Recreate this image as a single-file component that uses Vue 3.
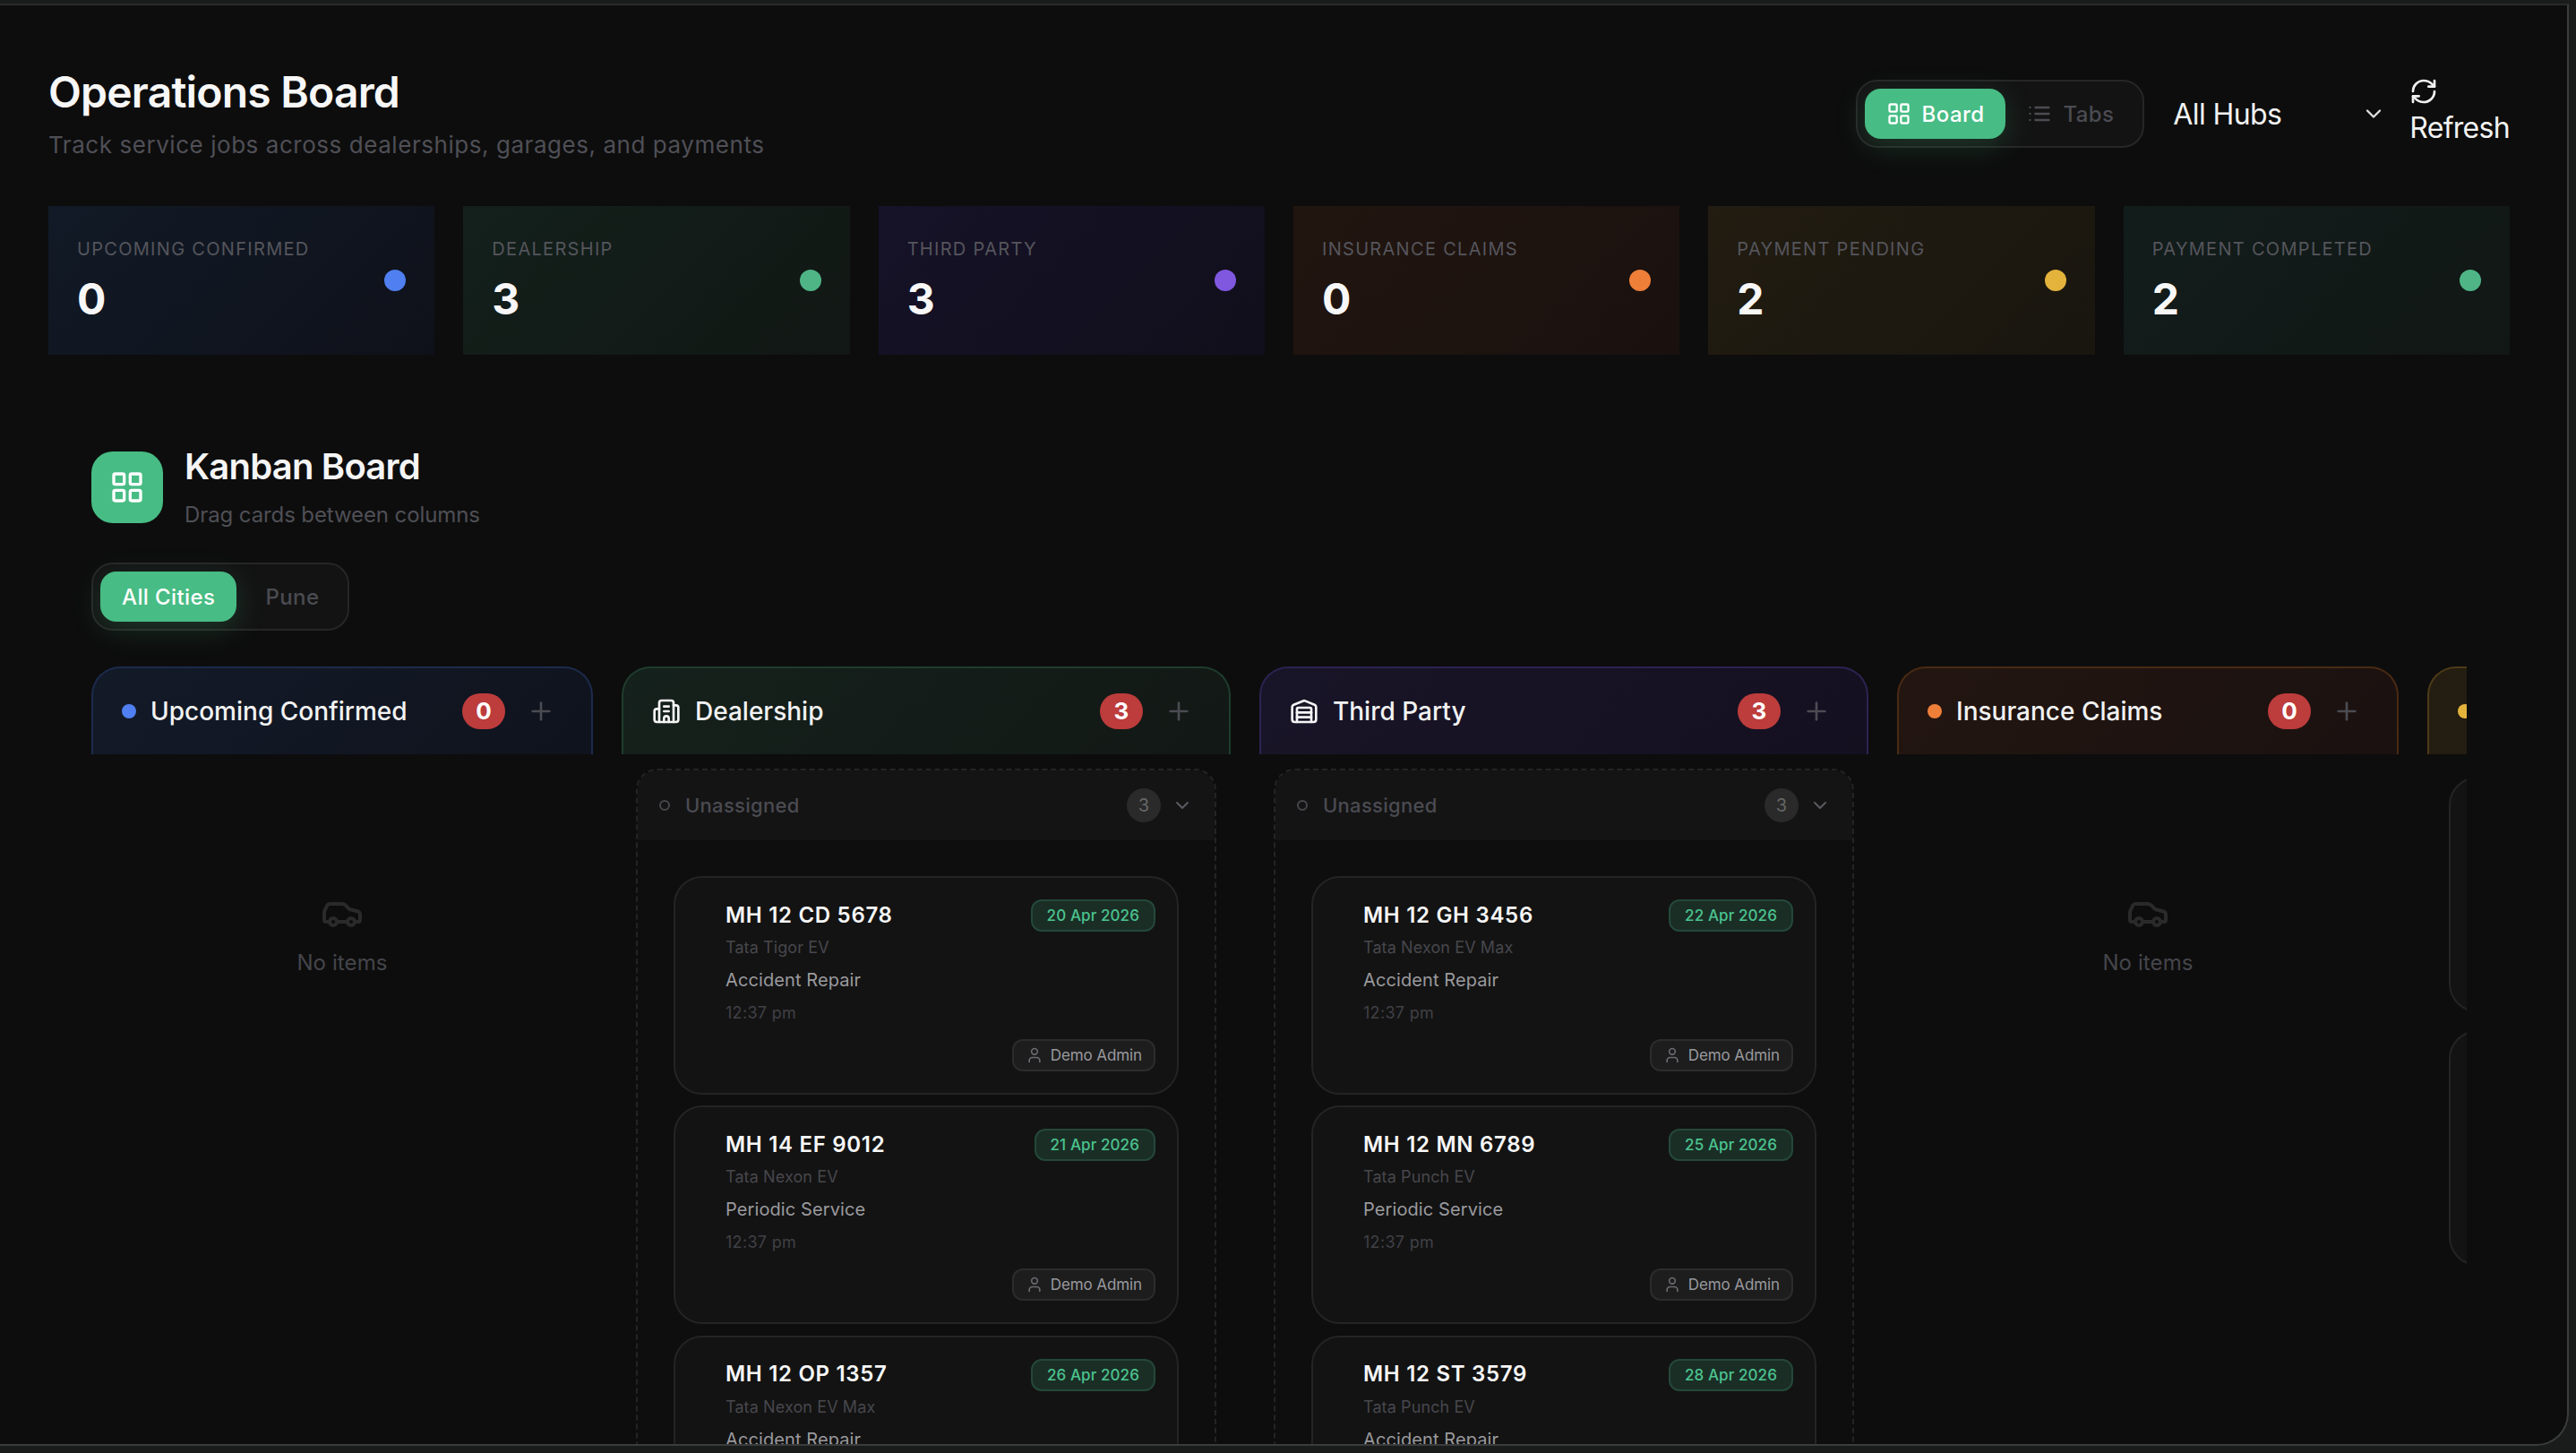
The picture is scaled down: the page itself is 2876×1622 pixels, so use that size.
<script setup>
import { h } from 'vue'

const icons = {
  grid: [
    'M4 3h5a1 1 0 0 1 1 1v5a1 1 0 0 1-1 1H4a1 1 0 0 1-1-1V4a1 1 0 0 1 1-1z',
    'M15 3h5a1 1 0 0 1 1 1v5a1 1 0 0 1-1 1h-5a1 1 0 0 1-1-1V4a1 1 0 0 1 1-1z',
    'M15 14h5a1 1 0 0 1 1 1v5a1 1 0 0 1-1 1h-5a1 1 0 0 1-1-1v-5a1 1 0 0 1 1-1z',
    'M4 14h5a1 1 0 0 1 1 1v5a1 1 0 0 1-1 1H4a1 1 0 0 1-1-1v-5a1 1 0 0 1 1-1z'
  ],
  list: ['M3 12h.01', 'M3 18h.01', 'M3 6h.01', 'M8 12h13', 'M8 18h13', 'M8 6h13'],
  refresh: [
    'M3 12a9 9 0 0 1 9-9 9.75 9.75 0 0 1 6.74 2.74L21 8',
    'M21 3v5h-5',
    'M21 12a9 9 0 0 1-9 9 9.75 9.75 0 0 1-6.74-2.74L3 16',
    'M8 16H3v5'
  ],
  chevron: ['m6 9 6 6 6-6'],
  plus: ['M5 12h14', 'M12 5v14'],
  user: ['M19 21v-2a4 4 0 0 0-4-4H9a4 4 0 0 0-4 4v2', 'M8 7a4 4 0 1 0 8 0a4 4 0 1 0-8 0'],
  building: [
    'M10 12h4',
    'M10 8h4',
    'M14 21v-3a2 2 0 0 0-4 0v3',
    'M6 10H4a2 2 0 0 0-2 2v7a2 2 0 0 0 2 2h16a2 2 0 0 0 2-2V9a2 2 0 0 0-2-2h-2',
    'M6 21V5a2 2 0 0 1 2-2h8a2 2 0 0 1 2 2v16'
  ],
  warehouse: [
    'M18 21V10a1 1 0 0 0-1-1H7a1 1 0 0 0-1 1v11',
    'M22 19V8.35a2 2 0 0 0-1.26-1.86l-8-3.2a2 2 0 0 0-1.48 0l-8 3.2A2 2 0 0 0 2 8.35V19a2 2 0 0 0 2 2h16a2 2 0 0 0 2-2z',
    'M6 13h12',
    'M6 17h12'
  ],
  car: [
    'M19 17h2c.6 0 1-.4 1-1v-3c0-.9-.7-1.7-1.5-1.9C18.7 10.6 16 10 16 10s-1.3-1.4-2.2-2.3c-.5-.4-1.1-.7-1.8-.7H5c-.6 0-1.1.4-1.4.9l-1.4 2.9A3.7 3.7 0 0 0 2 12v4c0 .6.4 1 1 1h2',
    'M5 17a2 2 0 1 0 4 0a2 2 0 1 0-4 0',
    'M9 17h6',
    'M15 17a2 2 0 1 0 4 0a2 2 0 1 0-4 0'
  ]
}

const Icon = (props) =>
  h(
    'svg',
    {
      viewBox: '0 0 24 24',
      fill: 'none',
      stroke: 'currentColor',
      'stroke-width': 2,
      'stroke-linecap': 'round',
      'stroke-linejoin': 'round'
    },
    icons[props.name].map((d) => h('path', { d }))
  )

const stats = [
  { label: 'Upcoming Confirmed', value: 0, tone: 'blue' },
  { label: 'Dealership', value: 3, tone: 'green' },
  { label: 'Third Party', value: 3, tone: 'purple' },
  { label: 'Insurance Claims', value: 0, tone: 'orange' },
  { label: 'Payment Pending', value: 2, tone: 'yellow' },
  { label: 'Payment Completed', value: 2, tone: 'teal' }
]

const columns = [
  { title: 'Upcoming Confirmed', tone: 'blue', count: 0 },
  {
    title: 'Dealership',
    tone: 'green',
    icon: 'building',
    count: 3,
    jobs: [
      { reg: 'MH 12 CD 5678', date: '20 Apr 2026', model: 'Tata Tigor EV', service: 'Accident Repair' },
      { reg: 'MH 14 EF 9012', date: '21 Apr 2026', model: 'Tata Nexon EV', service: 'Periodic Service' },
      { reg: 'MH 12 OP 1357', date: '26 Apr 2026', model: 'Tata Nexon EV Max', service: 'Accident Repair' }
    ]
  },
  {
    title: 'Third Party',
    tone: 'purple',
    icon: 'warehouse',
    count: 3,
    jobs: [
      { reg: 'MH 12 GH 3456', date: '22 Apr 2026', model: 'Tata Nexon EV Max', service: 'Accident Repair' },
      { reg: 'MH 12 MN 6789', date: '25 Apr 2026', model: 'Tata Punch EV', service: 'Periodic Service' },
      { reg: 'MH 12 ST 3579', date: '28 Apr 2026', model: 'Tata Punch EV', service: 'Accident Repair' }
    ]
  },
  { title: 'Insurance Claims', tone: 'orange', count: 0 },
  { title: 'Payment Pending', tone: 'yellow', count: 2, stubs: 2 }
]
</script>

<template>
  <div class="panel">
    <header class="top">
      <div>
        <h1 class="page-title">Operations Board</h1>
        <p class="page-sub">Track service jobs across dealerships, garages, and payments</p>
      </div>
      <div class="top-actions">
        <div class="segment">
          <button class="seg-btn active"><Icon name="grid" class="seg-icon" />Board</button>
          <button class="seg-btn"><Icon name="list" class="seg-icon" />Tabs</button>
        </div>
        <div class="hub-select">
          <span>All Hubs</span>
          <Icon name="chevron" class="hub-chevron" />
        </div>
        <button class="refresh">
          <Icon name="refresh" class="refresh-icon" />
          <span>Refresh</span>
        </button>
      </div>
    </header>

    <section class="stats">
      <div v-for="s in stats" :key="s.label" class="stat" :class="'stat-' + s.tone">
        <div>
          <p class="stat-label">{{ s.label }}</p>
          <p class="stat-value">{{ s.value }}</p>
        </div>
        <span class="stat-dot"></span>
      </div>
    </section>

    <section class="kanban">
      <div class="kanban-head">
        <div class="kanban-icon"><Icon name="grid" /></div>
        <div>
          <h2 class="kanban-title">Kanban Board</h2>
          <p class="kanban-sub">Drag cards between columns</p>
        </div>
      </div>

      <div class="segment city-tabs">
        <button class="seg-btn active">All Cities</button>
        <button class="seg-btn">Pune</button>
      </div>

      <div class="board">
        <div
          v-for="col in columns"
          :key="col.title"
          class="column"
          :class="[col.jobs ? 'column-wide' : '', 'col-' + col.tone]"
        >
          <div class="col-head">
            <Icon v-if="col.icon" :name="col.icon" class="col-icon" />
            <span v-else class="col-dot"></span>
            <span class="col-title">{{ col.title }}</span>
            <span class="col-count">{{ col.count }}</span>
            <Icon name="plus" class="col-plus" />
          </div>

          <div v-if="col.jobs" class="col-body">
            <div class="lane">
              <div class="lane-head">
                <span class="lane-dot"></span>
                <span class="lane-name">Unassigned</span>
                <span class="lane-count">{{ col.count }}</span>
                <Icon name="chevron" class="lane-chevron" />
              </div>
              <div class="lane-cards">
                <article v-for="job in col.jobs" :key="job.reg" class="job">
                  <div class="job-top">
                    <span class="job-reg">{{ job.reg }}</span>
                    <span class="job-date">{{ job.date }}</span>
                  </div>
                  <p class="job-model">{{ job.model }}</p>
                  <p class="job-service">{{ job.service }}</p>
                  <p class="job-time">12:37 pm</p>
                  <div class="job-foot">
                    <span class="job-owner"><Icon name="user" class="owner-icon" />Demo Admin</span>
                  </div>
                </article>
              </div>
            </div>
          </div>

          <div v-else-if="col.stubs" class="col-stubs">
            <div v-for="n in col.stubs" :key="n" class="stub"></div>
          </div>

          <div v-else class="empty">
            <Icon name="car" class="empty-icon" />
            <p class="empty-text">No items</p>
          </div>
        </div>
      </div>
    </section>
  </div>
</template>

<style>
body {
  background: #1a1c1c;
}
</style>

<style scoped>
.panel {
  box-sizing: border-box;
  width: 2868px;
  height: 1610px;
  margin-top: 4px;
  padding: 68px 64px 0 54px;
  overflow: hidden;
  background: #0d0d0d;
  border-top: 2px solid #2a2a2a;
  border-right: 2px solid #3a3c3c;
  border-bottom: 2px solid #3a3c3c;
  border-bottom-right-radius: 36px;
  font-family: Inter, "Liberation Sans", sans-serif;
  color: #f5f5f5;
}

p,
h1,
h2 {
  margin: 0;
}

button {
  font-family: inherit;
  background: none;
  border: 0;
  padding: 0;
}

.top {
  display: flex;
  justify-content: space-between;
  align-items: flex-start;
}

.page-title {
  font-size: 48px;
  line-height: 58px;
  font-weight: 600;
  letter-spacing: -0.8px;
  color: #f7f7f7;
}

.page-sub {
  margin-top: 10px;
  font-size: 26px;
  line-height: 40px;
  letter-spacing: 0.55px;
  color: #4f4f56;
}

.top-actions {
  display: flex;
  align-items: center;
  margin-top: 12px;
}

.segment {
  display: inline-flex;
  box-sizing: border-box;
  height: 76px;
  padding: 8px;
  background: #131313;
  border: 2px solid #262626;
  border-radius: 24px;
}

.seg-btn {
  display: flex;
  align-items: center;
  gap: 12px;
  height: 56px;
  padding: 0 24px;
  border-radius: 18px;
  font-size: 24px;
  font-weight: 500;
  letter-spacing: 0.4px;
  color: #4b4b52;
}

.seg-btn.active {
  background: #47bc84;
  color: #fff;
  box-shadow: 0 8px 32px rgba(71, 188, 132, 0.22);
}

.seg-icon {
  width: 28px;
  height: 28px;
}

.hub-select {
  display: flex;
  align-items: center;
  justify-content: space-between;
  width: 234px;
  margin-left: 32px;
  font-size: 32px;
  letter-spacing: -0.6px;
  color: #f2f2f2;
}

.hub-chevron {
  width: 28px;
  height: 28px;
  margin-right: -4px;
  color: #e0e0e0;
}

.refresh {
  display: block;
  margin-left: 30px;
  font-size: 32px;
  line-height: 50px;
  letter-spacing: -0.7px;
  color: #f2f2f2;
  text-align: left;
}

.refresh-icon {
  display: block;
  width: 32px;
  height: 32px;
}

.stats {
  display: grid;
  grid-template-columns: repeat(6, 1fr);
  gap: 32px;
  margin-top: 48px;
}

.stat {
  display: flex;
  align-items: center;
  justify-content: space-between;
  box-sizing: border-box;
  height: 166px;
  padding: 0 32px;
}

.stat-label {
  font-size: 20px;
  line-height: 28px;
  letter-spacing: 1.3px;
  text-transform: uppercase;
  color: #55555c;
}

.stat-value {
  margin-top: 13px;
  font-size: 48px;
  line-height: 58px;
  font-weight: 650;
  color: #f7f7f7;
}

.stat-dot {
  width: 24px;
  height: 24px;
  border-radius: 50%;
}

.stat-blue { background: linear-gradient(135deg, #111a26, #0f111a); }
.stat-blue .stat-dot { background: #4f7ff0; }
.stat-green { background: linear-gradient(135deg, #13201b, #111714); }
.stat-green .stat-dot { background: #4fb586; }
.stat-purple { background: linear-gradient(135deg, #161228, #110f1b); }
.stat-purple .stat-dot { background: #8058e0; }
.stat-orange { background: linear-gradient(135deg, #21150f, #1a110f); }
.stat-orange .stat-dot { background: #ee7f39; }
.stat-yellow { background: linear-gradient(135deg, #221c11, #19160f); }
.stat-yellow .stat-dot { background: #e3b33c; }
.stat-teal { background: linear-gradient(135deg, #121d1b, #111715); }
.stat-teal .stat-dot { background: #4fb586; }

.kanban {
  margin: 100px 48px 0;
}

.kanban-head {
  display: flex;
  align-items: center;
  gap: 24px;
}

.kanban-icon {
  display: flex;
  align-items: center;
  justify-content: center;
  width: 80px;
  height: 80px;
  border-radius: 24px;
  background: #47bc84;
  color: #fff;
}

.kanban-icon svg {
  width: 40px;
  height: 40px;
}

.kanban-title {
  margin-top: 1px;
  font-size: 40px;
  line-height: 48px;
  font-weight: 600;
  letter-spacing: -0.8px;
  color: #f5f5f5;
}

.kanban-sub {
  margin-top: 12px;
  font-size: 24px;
  line-height: 35px;
  letter-spacing: -0.1px;
  color: #4f4f56;
}

.city-tabs {
  gap: 8px;
  margin-top: 36px;
}

.board {
  display: flex;
  gap: 32px;
  margin-top: 40px;
  overflow: hidden;
}

.column {
  flex: 0 0 560px;
  min-width: 0;
}

.column-wide {
  flex-basis: 680px;
}

.col-head {
  display: flex;
  align-items: center;
  box-sizing: border-box;
  height: 98px;
  padding: 0 40px 0 32px;
  border: 2px solid;
  border-bottom: 0;
  border-radius: 32px 32px 0 0;
}

.col-blue .col-head { background: linear-gradient(135deg, #131a28, #0f131d); border-color: #1c2b4c; }
.col-green .col-head { background: linear-gradient(135deg, #15211c, #121815); border-color: #1f3d2e; }
.col-purple .col-head { background: linear-gradient(135deg, #191528, #141020); border-color: #2c2352; }
.col-orange .col-head { background: linear-gradient(135deg, #231611, #1a1110); border-color: #4a2a14; }
.col-yellow .col-head { background: linear-gradient(135deg, #241d12, #1f1a10); border-color: #4d3b17; }

.col-dot {
  flex: none;
  width: 16px;
  height: 16px;
  border-radius: 50%;
}

.col-blue .col-dot { background: #4f7ff0; }
.col-orange .col-dot { background: #ee7f39; }
.col-yellow .col-dot { background: #e3b33c; }

.col-icon {
  flex: none;
  width: 32px;
  height: 32px;
  color: #f5f5f5;
}

.col-title {
  flex: 1;
  margin-left: 16px;
  font-size: 28px;
  font-weight: 500;
  white-space: nowrap;
  color: #f2f2f2;
}

.col-count {
  width: 48px;
  height: 40px;
  border-radius: 20px;
  background: #bd3c3c;
  text-align: center;
  font-size: 26px;
  line-height: 40px;
  font-weight: 700;
  color: #fff;
}

.col-plus {
  flex: none;
  width: 32px;
  height: 32px;
  margin-left: 24px;
  color: #4b4b52;
}

.empty {
  display: flex;
  flex-direction: column;
  align-items: center;
  padding-top: 153px;
}

.empty-icon {
  width: 48px;
  height: 48px;
  color: #2a2a2a;
}

.empty-text {
  margin-top: 14px;
  font-size: 24px;
  line-height: 36px;
  letter-spacing: 0.1px;
  color: #45454b;
}

.col-body {
  padding: 16px 16px 0;
}

.lane {
  border: 2px dashed #242424;
  border-radius: 24px;
  background: #0e0e0e;
}

.lane-head {
  display: flex;
  align-items: center;
  height: 78px;
  padding: 0 24px;
  border-radius: 22px 22px 0 0;
  background: #141414;
}

.lane-dot {
  box-sizing: border-box;
  width: 12px;
  height: 12px;
  margin-right: 17px;
  border: 2px solid #46464c;
  border-radius: 50%;
}

.lane-name {
  flex: 1;
  font-size: 22px;
  font-weight: 500;
  letter-spacing: 0.3px;
  color: #4b4b52;
}

.lane-count {
  width: 38px;
  height: 38px;
  border-radius: 50%;
  background: #2a2a2a;
  text-align: center;
  font-size: 20px;
  line-height: 38px;
  color: #666;
}

.lane-chevron {
  width: 24px;
  height: 24px;
  margin-left: 12px;
  color: #5a5a60;
}

.lane-cards {
  display: flex;
  flex-direction: column;
  gap: 12.4px;
  padding: 40px 40px 0;
}

.job {
  box-sizing: border-box;
  padding: 24px 24px 24px 56px;
  border: 2px solid #242424;
  border-radius: 32px;
  background: #131313;
}

.job-top {
  display: flex;
  align-items: center;
  justify-content: space-between;
  height: 36px;
}

.job-reg {
  font-size: 24px;
  font-weight: 600;
  letter-spacing: 0.7px;
  color: #f7f7f7;
  margin-top: -2px;
}

.job-date {
  box-sizing: border-box;
  height: 36px;
  padding: 0 16px;
  border: 2px solid #24483a;
  border-radius: 12px;
  background: #1a2e26;
  font-size: 17px;
  line-height: 32px;
  font-weight: 500;
  letter-spacing: 0.1px;
  color: #4cc38f;
}

.job-model {
  margin-top: 2px;
  font-size: 18px;
  line-height: 32px;
  letter-spacing: 0.1px;
  color: #47474d;
}

.job-service {
  margin-top: 4px;
  font-size: 20px;
  line-height: 32px;
  letter-spacing: 0.1px;
  color: #9a9a9e;
}

.job-time {
  margin-top: 5px;
  font-size: 18px;
  line-height: 32px;
  letter-spacing: 0.3px;
  color: #404046;
}

.job-foot {
  display: flex;
  justify-content: flex-end;
  margin-top: 13px;
}

.job-owner {
  display: flex;
  align-items: center;
  gap: 8px;
  box-sizing: border-box;
  height: 36px;
  padding: 0 13px;
  border: 2px solid #2c2c2c;
  border-radius: 12px;
  background: #1d1d1d;
  font-size: 17px;
  letter-spacing: -0.1px;
  color: #99999e;
}

.owner-icon {
  width: 20px;
  height: 20px;
  color: #6a6a70;
}

.col-stubs {
  display: flex;
  flex-direction: column;
  gap: 20px;
  padding: 25px 24px 0;
}

.stub {
  height: 263px;
  box-sizing: border-box;
  border: 2px solid #242424;
  border-radius: 32px;
  background: #131313;
}
</style>
